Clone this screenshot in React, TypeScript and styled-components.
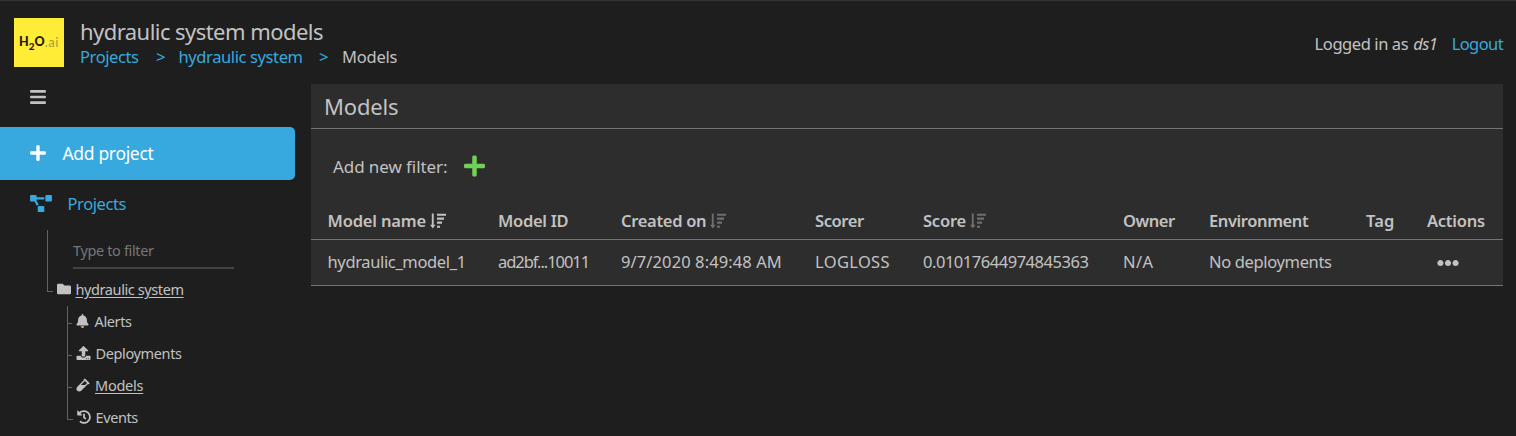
import React from 'react';
import styled, { createGlobalStyle } from 'styled-components';
import {
  FaBars, FaBell, FaEllipsisH, FaFolder, FaHistory, FaPlus, FaProjectDiagram, FaUpload, FaVial,
} from 'react-icons/fa';

const colors = {
  page: '#1e1e1e',
  panel: '#2d2d2d',
  text: '#c2c2c2',
  muted: '#767676',
  line: '#747474',
  blue: '#37a9df',
  green: '#70d156',
  yellow: '#ffec36',
};

const GlobalStyle = createGlobalStyle`
  * { box-sizing: border-box; }
  body {
    margin: 0;
    background: ${colors.page};
    color: ${colors.text};
    font-family: "Noto Sans", "Open Sans", sans-serif;
    font-size: 16.5px;
    font-weight: 400;
    white-space: nowrap;
  }
  svg { display: block; flex: none; }
`;

const Page = styled.div`
  height: 436px;
  overflow: hidden;
  border-top: 1px solid #333;
`;

const Header = styled.header`
  display: flex;
  height: 83px;
  padding: 17px 13px 0 14px;
`;

const Logo = styled.div`
  display: flex;
  align-items: center;
  justify-content: center;
  width: 50px;
  height: 49px;
  padding-bottom: 1px;
  background: ${colors.yellow};
  color: #1c1a10;
  font: 900 12.5px/1 Lato, sans-serif;
`;

const LogoSub = styled.span`
  font-size: 10px;
  transform: translateY(4px);
`;

const LogoSuffix = styled.span`
  color: #a79c39;
  font-size: 13px;
  font-weight: 400;
  letter-spacing: 0.5px;
`;

const Titles = styled.div`
  margin-left: 16px;
`;

const Title = styled.h1`
  margin: 0;
  font-size: 22px;
  font-weight: 400;
  line-height: 26px;
  letter-spacing: -0.55px;
`;

const Label = styled.span<{ $track?: number }>`
  letter-spacing: ${(p) => p.$track ?? 0}px;
`;

const Breadcrumbs = styled.nav`
  display: flex;
  line-height: 25px;
`;

const Crumb = styled.a<{ $track: number; $width?: number; $current?: boolean }>`
  width: ${(p) => (p.$width ? `${p.$width}px` : 'auto')};
  color: ${(p) => (p.$current ? colors.text : colors.blue)};
  letter-spacing: ${(p) => p.$track}px;
`;

const Separator = styled.span<{ $width: number }>`
  width: ${(p) => p.$width}px;
  color: ${colors.blue};
`;

const Account = styled.div`
  display: flex;
  margin-left: auto;
  line-height: 52px;
`;

const UserName = styled.em`
  width: 38.5px;
  margin-left: 5px;
  letter-spacing: -0.5px;
`;

const Logout = styled.a`
  color: ${colors.blue};
  letter-spacing: -0.59px;
`;

const Body = styled.div`
  display: flex;
  align-items: flex-start;
`;

const Sidebar = styled.aside`
  width: 294.5px;
  margin-right: 16.5px;
`;

const MenuToggle = styled.div`
  display: flex;
  align-items: center;
  height: 42.5px;
  padding: 0 0 16.5px 30px;

  svg { width: 16px; height: 18px; }
`;

const AddProject = styled.button`
  display: flex;
  align-items: center;
  width: 100%;
  height: 53px;
  padding: 0 0 0 30px;
  border: 0;
  border-radius: 0 5px 5px 0;
  background: ${colors.blue};
  color: #fff;
  font: 400 17.5px "Noto Sans", sans-serif;
  letter-spacing: -0.33px;

  svg { width: 16px; height: 18px; margin-right: 16.5px; }
`;

const ProjectsLink = styled.a`
  display: flex;
  align-items: center;
  height: 47.5px;
  padding-left: 30px;
  color: ${colors.blue};
  letter-spacing: -0.41px;

  svg { width: 22px; height: 17.5px; margin-right: 15.5px; }
`;

const Tree = styled.div`
  display: flex;
  flex-direction: column;
  margin: 3px 0 0 47px;
  font-size: 14.5px;
`;

const FilterRow = styled.div`
  height: 44px;
  padding: 4px 0 0 25px;
  border-left: 1px solid #626262;
`;

const FilterField = styled.div`
  width: 161px;
  height: 35px;
  border-bottom: 2px solid #444;
  color: ${colors.muted};
  line-height: 33px;
  letter-spacing: -0.36px;
`;

const Branch = styled.div`
  display: flex;
  height: 32px;

  &::before {
    content: '';
    flex: none;
    width: 5px;
    height: 17px;
    border-left: 1px solid #626262;
    border-bottom: 1px solid #626262;
  }
`;

const Children = styled.div`
  margin-left: 20px;
`;

const Leaf = styled.div<{ $last?: boolean }>`
  display: flex;
  height: 32px;
  border-left: ${(p) => (p.$last ? 0 : 1)}px solid #626262;

  &::before {
    content: '';
    flex: none;
    width: ${(p) => (p.$last ? 5 : 4)}px;
    height: 17px;
    border-left: ${(p) => (p.$last ? 1 : 0)}px solid #626262;
    border-bottom: 1px solid #626262;
  }
`;

const NodeLink = styled.a<{ $track: number; $iconWidth: number; $gap: number; $underlined?: boolean }>`
  display: flex;
  align-items: center;
  height: 30px;
  margin-left: 4px;
  letter-spacing: ${(p) => p.$track}px;
  text-decoration: ${(p) => (p.$underlined ? 'underline' : 'none')};
  text-underline-offset: 2px;

  svg {
    width: ${(p) => p.$iconWidth}px;
    height: 14px;
    margin-right: ${(p) => p.$gap}px;
  }
`;

const Panel = styled.main`
  width: 1192px;
  background: ${colors.panel};
`;

const PanelTitle = styled.h2`
  height: 45px;
  margin: 0;
  padding-left: 13px;
  border-bottom: 1px solid ${colors.line};
  font-size: 22px;
  font-weight: 400;
  line-height: 44px;
  letter-spacing: -0.18px;
`;

const FilterBar = styled.div`
  display: flex;
  align-items: center;
  height: 74px;
  padding-left: 22px;
  font-size: 17px;

  svg { width: 21px; height: 24px; margin-left: 16.5px; color: ${colors.green}; }
`;

const TableRow = styled.div<{ $head?: boolean }>`
  display: grid;
  grid-template-columns: 170.5px 123px 194px 108px 200px 86px 157px 61px 1fr;
  align-items: center;
  height: ${(p) => (p.$head ? 37 : 46)}px;
  padding-left: 16.5px;
  border-bottom: 1px solid ${colors.line};
  font-weight: ${(p) => (p.$head ? 600 : 400)};
`;

const Cell = styled.div`
  display: flex;
  align-items: center;
  height: 100%;
`;

const HeadCell = styled(Cell)`
  padding-bottom: 1px;
`;

const BodyCell = styled(Cell)`
  padding-bottom: 3px;
`;

const ActionsCell = styled(Cell)`
  padding: 1px 0 0 10px;

  svg { width: 22px; height: 22px; }
`;

const SortSvg = styled.svg<{ $active?: boolean }>`
  width: 16px;
  height: 16px;
  margin-left: 4px;
  color: ${(p) => (p.$active ? colors.text : '#6e6e6e')};
`;

function SortIcon({ active }: { active?: boolean }) {
  return (
    <SortSvg $active={active} viewBox="0 0 16 16" fill="currentColor">
      <path d="M1.8 .5h1.9v11.2h1.8L2.75 15.5 0 11.7h1.8z" />
      <path d="M7 .7h9v2.1H7zM7 4.6h7v2.1H7zM7 8.6h5v2.1H7zM7 12.7h3v2.1H7z" />
    </SortSvg>
  );
}

const columns = [
  { name: 'Model name', track: -0.16, sort: true, active: true },
  { name: 'Model ID', track: -0.29 },
  { name: 'Created on', track: -0.31, sort: true },
  { name: 'Scorer', track: -0.4 },
  { name: 'Score', track: -0.22, sort: true },
  { name: 'Owner', track: -0.46 },
  { name: 'Environment', track: -0.4 },
  { name: 'Tag', track: 0.1 },
  { name: 'Actions', track: -0.25 },
];

const cells = [
  { value: 'hydraulic_model_1', track: -0.36 },
  { value: 'ad2bf...10011', track: -1.05 },
  { value: '9/7/2020 8:49:48 AM', track: 0.1 },
  { value: 'LOGLOSS', track: 0.34 },
  { value: '0.01017644974845363', track: -0.47 },
  { value: 'N/A', track: 0.4 },
  { value: 'No deployments', track: -0.35 },
  { value: '', track: 0 },
];

const leaves = [
  { name: 'Alerts', icon: <FaBell />, width: 13, gap: 5.5, track: -0.38 },
  { name: 'Deployments', icon: <FaUpload />, width: 15, gap: 4.5, track: -0.37 },
  { name: 'Models', icon: <FaVial />, width: 14, gap: 5, track: -0.25, underlined: true },
  { name: 'Events', icon: <FaHistory />, width: 14, gap: 4.5, track: -0.4 },
];

export default function App() {
  return (
    <Page>
      <GlobalStyle />
      <Header>
        <Logo>
          H<LogoSub>2</LogoSub>O<LogoSuffix>.ai</LogoSuffix>
        </Logo>
        <Titles>
          <Title>hydraulic system models</Title>
          <Breadcrumbs>
            <Crumb $track={-0.41} $width={76}>Projects</Crumb>
            <Separator $width={22.5}>&gt;</Separator>
            <Crumb $track={-0.39} $width={140.5}>hydraulic system</Crumb>
            <Separator $width={23}>&gt;</Separator>
            <Crumb $track={-0.23} $current>Models</Crumb>
          </Breadcrumbs>
        </Titles>
        <Account>
          <Label $track={-0.42}>Logged in as</Label>
          <UserName>ds1</UserName>
          <Logout>Logout</Logout>
        </Account>
      </Header>
      <Body>
        <Sidebar>
          <MenuToggle><FaBars /></MenuToggle>
          <AddProject><FaPlus />Add project</AddProject>
          <ProjectsLink><FaProjectDiagram />Projects</ProjectsLink>
          <Tree>
            <FilterRow><FilterField>Type to filter</FilterField></FilterRow>
            <Branch>
              <NodeLink $track={-0.4} $iconWidth={14} $gap={4.5} $underlined>
                <FaFolder />hydraulic system
              </NodeLink>
            </Branch>
            <Children>
              {leaves.map((leaf, i) => (
                <Leaf key={leaf.name} $last={i === leaves.length - 1}>
                  <NodeLink
                    $track={leaf.track}
                    $iconWidth={leaf.width}
                    $gap={leaf.gap}
                    $underlined={leaf.underlined}
                  >
                    {leaf.icon}{leaf.name}
                  </NodeLink>
                </Leaf>
              ))}
            </Children>
          </Tree>
        </Sidebar>
        <Panel>
          <PanelTitle>Models</PanelTitle>
          <FilterBar><Label $track={-0.08}>Add new filter:</Label><FaPlus /></FilterBar>
          <TableRow $head>
            {columns.map((column) => (
              <HeadCell key={column.name}>
                <Label $track={column.track}>{column.name}</Label>
                {column.sort && <SortIcon active={column.active} />}
              </HeadCell>
            ))}
          </TableRow>
          <TableRow>
            {cells.map((cell, i) => (
              <BodyCell key={i}><Label $track={cell.track}>{cell.value}</Label></BodyCell>
            ))}
            <ActionsCell><FaEllipsisH /></ActionsCell>
          </TableRow>
        </Panel>
      </Body>
    </Page>
  );
}
